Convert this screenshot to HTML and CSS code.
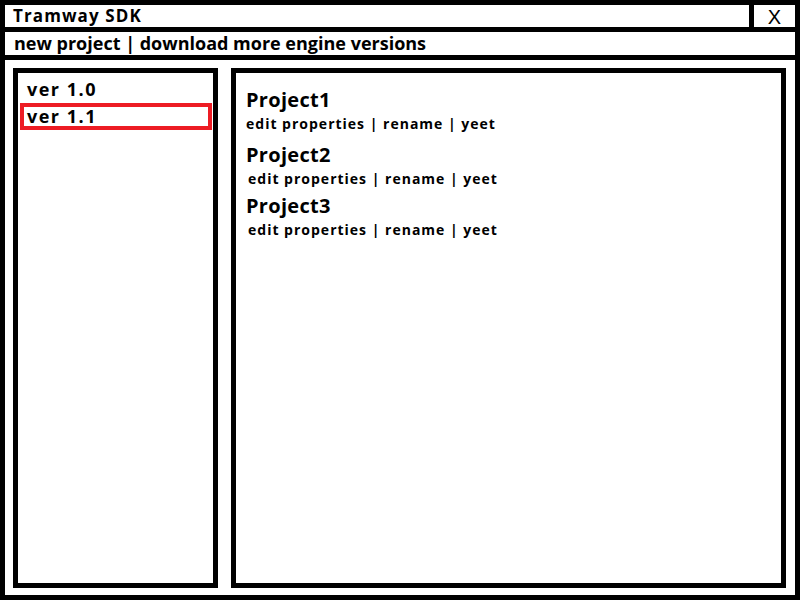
FILE: index.html
```html
<!DOCTYPE html>
<html>
<head>
<meta charset="utf-8">
<title>Tramway SDK</title>
<link rel="stylesheet" href="styles.css">
</head>
<body>
<div class="window">
  <div class="titlebar">
    <div class="title">Tramway SDK</div>
    <div class="close">X</div>
  </div>
  <div class="toolbar">new project | download more engine versions</div>
  <div class="content">
    <div class="panel versions">
      <div class="version">ver 1.0</div>
      <div class="version selected">ver 1.1</div>
    </div>
    <div class="panel projects">
      <div class="project first">
        <div class="project-name">Project1</div>
        <div class="project-actions">edit properties | rename | yeet</div>
      </div>
      <div class="project">
        <div class="project-name">Project2</div>
        <div class="project-actions shifted">edit properties | rename | yeet</div>
      </div>
      <div class="project">
        <div class="project-name">Project3</div>
        <div class="project-actions shifted">edit properties | rename | yeet</div>
      </div>
    </div>
  </div>
</div>
</body>
</html>
```
FILE: styles.css
```css
* { box-sizing: border-box; }
html, body { margin: 0; padding: 0; background: #fff; }
body {
  font-family: "Open Sans", "DejaVu Sans", sans-serif;
  font-weight: 700;
  color: #000;
}
.window {
  width: 800px;
  height: 600px;
  border: 5px solid #000;
  display: flex;
  flex-direction: column;
}
.titlebar {
  height: 27px;
  border-bottom: 5px solid #000;
  display: flex;
}
.title {
  flex: 1;
  padding-left: 8px;
  font-size: 17px;
  line-height: 21px;
  letter-spacing: 1.1px;
}
.close {
  width: 46px;
  border-left: 5px solid #000;
  text-align: center;
  font-family: "Liberation Sans", sans-serif;
  font-weight: 400;
  font-size: 20px;
  line-height: 24px;
}
.toolbar {
  height: 28px;
  border-bottom: 5px solid #000;
  padding-left: 9px;
  font-size: 18px;
  line-height: 22px;
}
.content {
  flex: 1;
  display: flex;
  gap: 13px;
  padding: 8px 9px 7px 8px;
}
.panel {
  border: 5px solid #000;
}
.versions {
  width: 205px;
  padding: 3px 1px 0 2px;
}
.projects {
  flex: 1;
  padding: 14px 10px 0 10px;
}
.version {
  height: 27px;
  border: 4px solid transparent;
  padding: 0 3px;
  font-size: 18px;
  line-height: 19px;
  letter-spacing: 1.5px;
}
.version.selected {
  border-color: #ed1c24;
}
.project { margin-bottom: 2px; }
.project.first { margin-bottom: 6px; }
.project-name {
  font-size: 20px;
  line-height: 25px;
  letter-spacing: 0.3px;
}
.project-actions {
  font-size: 14px;
  line-height: 24px;
  letter-spacing: 1px;
}
.project-actions.shifted { padding-left: 2px; }
```
